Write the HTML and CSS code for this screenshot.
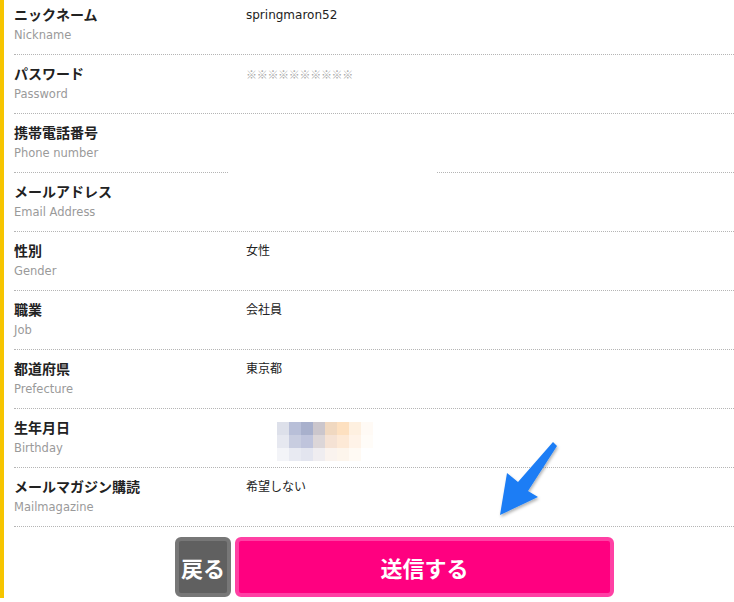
FILE: index.html
```html
<!DOCTYPE html>
<html lang="ja">
<head>
<meta charset="utf-8">
<link rel="stylesheet" href="styles.css">
</head>
<body>
<div class="page">
  <div class="form">
    <div class="row">
      <div class="label"><div class="jp">ニックネーム</div><div class="en">Nickname</div></div>
      <div class="value">springmaron52</div>
    </div>
    <div class="row">
      <div class="label"><div class="jp">パスワード</div><div class="en">Password</div></div>
      <div class="value pw">※※※※※※※※※※</div>
    </div>
    <div class="row">
      <div class="label"><div class="jp">携帯電話番号</div><div class="en">Phone number</div></div>
      <div class="value"></div>
      <div class="mask"></div>
    </div>
    <div class="row">
      <div class="label"><div class="jp">メールアドレス</div><div class="en">Email Address</div></div>
      <div class="value"></div>
    </div>
    <div class="row">
      <div class="label"><div class="jp">性別</div><div class="en">Gender</div></div>
      <div class="value">女性</div>
    </div>
    <div class="row">
      <div class="label"><div class="jp">職業</div><div class="en">Job</div></div>
      <div class="value">会社員</div>
    </div>
    <div class="row">
      <div class="label"><div class="jp">都道府県</div><div class="en">Prefecture</div></div>
      <div class="value">東京都</div>
    </div>
    <div class="row">
      <div class="label"><div class="jp">生年月日</div><div class="en">Birthday</div></div>
      <div class="value">
        <div class="mosaic">
          <i style="background:#dde0ea"></i><i style="background:#b8bfd8"></i><i style="background:#a8b0cc"></i><i style="background:#cbc6cc"></i><i style="background:#f0d8c0"></i><i style="background:#fde0c0"></i><i style="background:#fef0e0"></i><i style="background:#fffaf5"></i>
          <i style="background:#e6e8f0"></i><i style="background:#c8cde0"></i><i style="background:#bfc4dc"></i><i style="background:#dcd6d8"></i><i style="background:#f5e2d4"></i><i style="background:#fde9d6"></i><i style="background:#fff3e8"></i><i style="background:#fffcf8"></i>
          <i style="background:#f3f4f8"></i><i style="background:#e8eaf2"></i><i style="background:#e3e5ef"></i><i style="background:#efedf0"></i><i style="background:#faf3ee"></i><i style="background:#fdf5ec"></i><i style="background:#fffaf4"></i><i style="background:#ffffff"></i>
        </div>
      </div>
    </div>
    <div class="row">
      <div class="label"><div class="jp">メールマガジン購読</div><div class="en">Mailmagazine</div></div>
      <div class="value">希望しない</div>
    </div>
  </div>
  <div class="buttons">
    <button class="btn back">戻る</button>
    <button class="btn send">送信する</button>
  </div>
</div>
<svg class="arrow" width="734" height="602" viewBox="0 0 734 602">
  <defs>
    <filter id="sh" x="-30%" y="-30%" width="160%" height="160%">
      <feDropShadow dx="1" dy="2" stdDeviation="1.5" flood-color="#000" flood-opacity="0.3"/>
    </filter>
  </defs>
  <polygon filter="url(#sh)" fill="#1b7df5" points="553,442 557,446 528,491 538,497 500,515 507,473 518,482"/>
</svg>
</body>
</html>
```

FILE: styles.css
```css
html, body {
  margin: 0;
  padding: 0;
  background: #fff;
  overflow: hidden;
}
body {
  width: 734px;
  height: 602px;
  position: relative;
  font-family: "Noto Sans CJK JP", sans-serif;
  color: #222;
}
.page {
  border-left: 4px solid #f6c500;
  padding-left: 10px;
  height: 602px;
  box-sizing: border-box;
}
.form {
  margin-top: -4px;
}
.row {
  position: relative;
  display: flex;
  height: 59px;
  box-sizing: border-box;
  border-bottom: 1px dotted #b5b5b5;
  padding-top: 9px;
}
.label {
  width: 232px;
  flex: none;
}
.jp {
  font-size: 14px;
  font-weight: bold;
  line-height: 18px;
  color: #222;
}
.en {
  font-family: "DejaVu Sans", sans-serif;
  font-size: 11.5px;
  line-height: 14px;
  margin-top: 5px;
  color: #9a9a9a;
}
.value {
  font-family: "DejaVu Sans", "Noto Sans CJK JP", sans-serif;
  font-size: 12px;
  line-height: 16px;
  color: #222;
  margin-top: 2px;
}
.value.pw {
  font-family: "Noto Sans CJK JP", sans-serif;
  color: #aaa;
  font-size: 11px;
  letter-spacing: -0.3px;
}
.mask {
  position: absolute;
  left: 214px;
  width: 209px;
  bottom: -1px;
  height: 4px;
  background: #fff;
}
.mosaic {
  display: grid;
  grid-template-columns: repeat(8, 12px);
  grid-auto-rows: 13px;
  margin-left: 31px;
  margin-top: 2px;
}
.mosaic i {
  display: block;
}
.buttons {
  display: flex;
  gap: 4px;
  margin-top: 10px;
  margin-left: 161px;
}
.btn {
  height: 60px;
  box-sizing: border-box;
  border-radius: 6px;
  color: #fff;
  font-family: "Noto Sans CJK JP", sans-serif;
  font-weight: bold;
  font-size: 22px;
  padding: 0;
  display: flex;
  align-items: center;
  justify-content: center;
}
.back {
  width: 56px;
  background: #606060;
  border: 4px solid #777;
}
.send {
  width: 379px;
  background: #ff0080;
  border: 4px solid #ff40a4;
}
.arrow {
  position: absolute;
  left: 0;
  top: 0;
  pointer-events: none;
}
```
